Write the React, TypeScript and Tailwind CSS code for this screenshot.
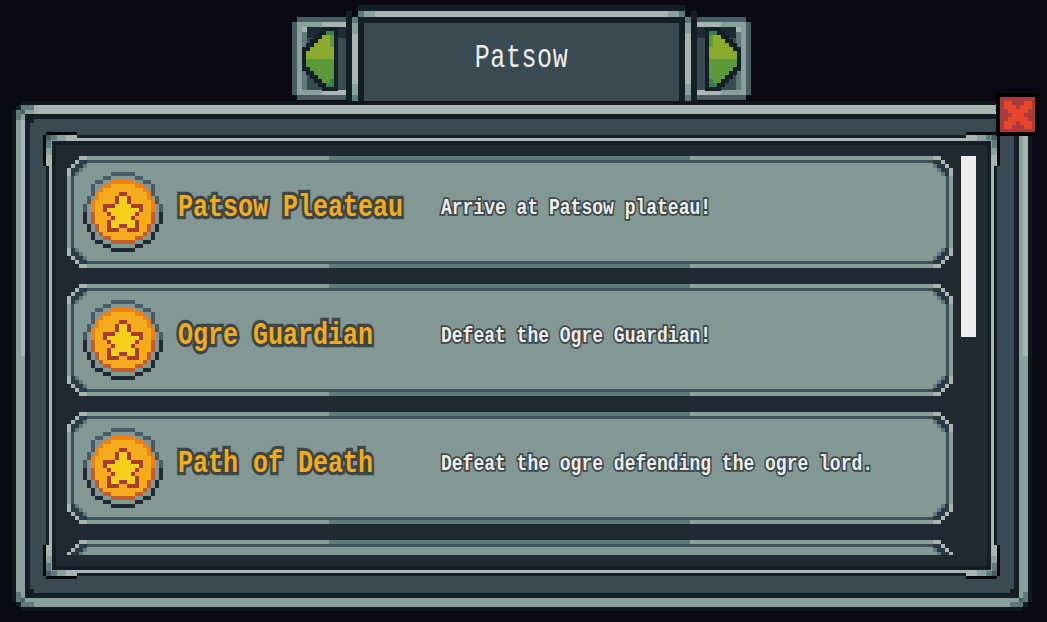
import React from "react";

const LIGHT = "#a8b5b2";
const MID = "#8aa09c";
const SLATE = "#5f7a7b";
const SLATE2 = "#465c62";
const DARK = "#141e27";
const INK = "#1f2a33";
const PANEL = "#3a4a52";
const BG = "#080912";

type R = [number, number, number, number, string];
function Rects({ items }: { items: R[] }) {
  return (
    <>
      {items.map(([x, y, w, h, c], i) => (
        <rect key={i} x={x} y={y} width={w} height={h} fill={c} />
      ))}
    </>
  );
}

function ArrowButton({ flip }: { flip?: boolean }) {
  const cols: [number, number, number][] = [
    [306, 51, 67],
    [310, 47, 71],
    [314, 43, 75],
    [318, 39, 79],
    [322, 35, 83],
    [326, 31, 87],
    [330, 31, 87],
  ];
  const items: R[] = [
    [304, 27, 42, 64, PANEL],
    [307, 27, 31, 11, INK],
    [297, 17, 49, 5, SLATE2],
    [297, 22, 49, 5, MID],
    [322, 22, 24, 5, LIGHT],
    [292, 22, 5, 73, SLATE2],
    [297, 27, 5, 63, MID],
    [302, 27, 5, 63, SLATE],
    [302, 27, 5, 5, LIGHT],
    [297, 95, 49, 5, SLATE2],
    [297, 90, 49, 5, MID],
    [322, 90, 24, 5, LIGHT],
    [338, 27, 8, 11, INK],
    [334, 27, 4, 64, DARK],
    [326, 27, 8, 4, DARK],
    [326, 87, 12, 4, DARK],
  ];
  cols.forEach(([x, a, b]) => {
    items.push([x - 4, a - 4, 8, b - a + 8, DARK]);
  });
  cols.forEach(([x, a, b]) => {
    items.push([x, a, 4, 59 - a, "#8aab2e"]);
    items.push([x, 59, 4, b - 59, "#5a9a3a"]);
  });
  items.push([326, 31, 8, 4, "#3a8055"], [330, 35, 4, 12, "#5f9a3a"], [330, 79, 4, 8, "#3a8055"], [326, 83, 8, 4, "#3a8055"]);
  return (
    <svg
      width={54}
      height={84}
      viewBox="292 17 54 84"
      shapeRendering="crispEdges"
      className={flip ? "block -scale-x-100" : "block"}
    >
      <Rects items={items} />
    </svg>
  );
}

function Tab() {
  return (
    <div className="flex h-[96px] w-[351px]">
      <div className="mt-[6px] w-[6px] bg-[#141e27]" />
      <div className="mt-[12px] w-[6px] bg-[linear-gradient(to_bottom,#5f7a7b_0,#5f7a7b_6px,#8aa09c_6px,#8aa09c_17px,#a8b5b2_17px,#a8b5b2_67px,#8aa09c_67px,#8aa09c_78px,#5f7a7b_78px)]" />
      <div className="flex min-w-0 flex-1 flex-col">
        <div className="h-[6px] bg-[#141e27]" />
        <div className="h-[6px] bg-[linear-gradient(to_right,#5f7a7b_0,#5f7a7b_6px,#8aa09c_6px,#8aa09c_17px,#a8b5b2_17px,#a8b5b2_310px,#8aa09c_310px,#8aa09c_321px,#5f7a7b_321px)]" />
        <div className="flex flex-1 items-center justify-center border-x-[6px] border-t-[6px] border-[#141e27] bg-[#3a4a52]">
          <span className="mb-[8px] inline-block origin-center scale-y-[1.3] font-['Liberation_Mono',monospace] text-[25px] leading-none tracking-[0.6px] text-[#eeeeee]">
            Patsow
          </span>
        </div>
      </div>
      <div className="mt-[12px] w-[6px] bg-[linear-gradient(to_bottom,#5f7a7b_0,#5f7a7b_6px,#8aa09c_6px,#8aa09c_17px,#a8b5b2_17px,#a8b5b2_67px,#8aa09c_67px,#8aa09c_78px,#5f7a7b_78px)]" />
      <div className="mt-[6px] w-[6px] bg-[#141e27]" />
    </div>
  );
}

function Coin() {
  const disc: [number, number, number][] = [
    [2, 7, 12], [3, 5, 14], [4, 4, 15], [5, 3, 16], [6, 3, 16],
    [7, 2, 17], [8, 2, 17], [9, 2, 17], [10, 2, 17], [11, 2, 17], [12, 2, 17],
    [13, 3, 16], [14, 3, 16], [15, 4, 15], [16, 5, 14], [17, 7, 12],
  ];
  const inner: [number, number, number][] = [
    [3, 7, 12], [4, 5, 14], [5, 4, 15], [6, 4, 15],
    [7, 3, 16], [8, 3, 16], [9, 3, 16], [10, 3, 16], [11, 3, 16], [12, 3, 16],
    [13, 4, 15], [14, 4, 15], [15, 5, 14], [16, 7, 12],
  ];
  const items: R[] = [];
  disc.forEach(([r, a, b]) => items.push([a, r, b - a + 1, 1, r < 10 ? "#f57f17" : "#c75a2a"]));
  inner.forEach(([r, a, b]) => items.push([a, r, b - a + 1, 1, "#f5ac1b"]));
  const ringTop = "#465c62";
  const ringLow = "#1f2a33";
  const ring: [number, number, number][] = [
    [0, 7, 12], [1, 5, 6], [1, 13, 14], [2, 3, 4], [2, 15, 16], [3, 2, 2], [3, 17, 17],
    [4, 2, 2], [4, 17, 17], [5, 2, 2], [5, 17, 17], [6, 1, 1], [6, 18, 18], [7, 1, 1], [7, 18, 18],
    [8, 0, 0], [8, 19, 19], [9, 0, 0], [9, 19, 19], [10, 0, 0], [10, 19, 19], [11, 0, 0], [11, 19, 19],
    [12, 0, 0], [12, 19, 19], [13, 1, 1], [13, 18, 18], [14, 1, 1], [14, 18, 18], [15, 2, 2], [15, 17, 17],
    [16, 2, 2], [16, 17, 17], [17, 3, 4], [17, 15, 16], [18, 5, 6], [18, 13, 14], [19, 7, 12],
  ];
  ring.forEach(([r, a, b]) => items.push([a, r, b - a + 1, 1, r < 10 ? ringTop : ringLow]));
  const R_ = "#a83a3a";
  const Y = "#f5d018";
  const star: [number, number, number, string][] = [
    [5, 9, 10, R_],
    [6, 8, 8, R_], [6, 9, 10, Y], [6, 11, 11, R_],
    [7, 8, 8, R_], [7, 9, 10, Y], [7, 11, 11, R_],
    [8, 5, 7, R_], [8, 8, 11, Y], [8, 12, 14, R_],
    [9, 5, 5, R_], [9, 6, 13, Y], [9, 14, 14, R_],
    [10, 6, 6, R_], [10, 7, 12, Y], [10, 13, 13, R_],
    [11, 7, 7, R_], [11, 8, 11, Y], [11, 12, 12, R_],
    [12, 6, 6, R_], [12, 7, 12, Y], [12, 13, 13, R_],
    [13, 6, 6, R_], [13, 7, 8, Y], [13, 9, 10, R_], [13, 11, 12, Y], [13, 13, 13, R_],
    [14, 6, 8, R_], [14, 11, 13, R_],
  ];
  star.forEach(([r, a, b, c]) => items.push([a, r, b - a + 1, 1, c]));
  return (
    <svg width={80} height={80} viewBox="0 0 20 20" shapeRendering="crispEdges" className="block shrink-0">
      <Rects items={items} />
    </svg>
  );
}

function CardCorner({ className }: { className: string }) {
  const items: R[] = [
    [0, 0, 3, 1, INK], [0, 1, 2, 1, INK], [0, 2, 1, 1, INK],
    [3, 0, 2, 1, LIGHT], [2, 1, 1, 1, LIGHT], [1, 2, 1, 1, LIGHT], [0, 3, 1, 2, LIGHT],
    [3, 1, 2, 1, "#2b3a44"], [2, 2, 2, 1, "#2b3a44"], [1, 3, 2, 1, "#2b3a44"], [1, 4, 1, 1, "#2b3a44"],
    [4, 2, 1, 1, SLATE], [3, 3, 1, 1, SLATE], [2, 4, 1, 1, SLATE],
  ];
  return (
    <svg width={24} height={24} viewBox="0 0 6 6" shapeRendering="crispEdges" className={`absolute ${className}`}>
      <Rects items={items} />
    </svg>
  );
}

function Card({ title, text }: { title?: string; text?: string }) {
  return (
    <div className="relative h-[112px] w-[886px] shrink-0 border-[4px] border-[#8aa09c]">
      <div className="flex h-full items-center border-[3px] border-[#3e5058] bg-[#839794] pl-[9px]">
        {title ? (
          <>
            <Coin />
            <div className="mb-[8px] ml-[15px] w-[263px] shrink-0">
              <span className="inline-block origin-left scale-y-[1.28] font-['Liberation_Mono',monospace] text-[25px] font-bold leading-none text-[#f5ac1b] [-webkit-text-stroke:5px_#3c4648] [paint-order:stroke_fill]">
                {title}
              </span>
            </div>
            <span className="mb-[8px] inline-block origin-left scale-y-[1.2] font-['Liberation_Mono',monospace] text-[18px] font-bold leading-none text-[#eeeeee] [-webkit-text-stroke:3px_#3c4648] [paint-order:stroke_fill]">
              {text}
            </span>
          </>
        ) : null}
      </div>
      <div className="absolute left-[258px] top-[-4px] h-[4px] w-[361px] bg-[#5f7a7b]" />
      <div className="absolute bottom-[-4px] left-[258px] h-[4px] w-[361px] bg-[#5f7a7b]" />
      <CardCorner className="left-[-4px] top-[-4px]" />
      <CardCorner className="right-[-4px] top-[-4px] -scale-x-100" />
      <CardCorner className="bottom-[-4px] left-[-4px] -scale-y-100" />
      <CardCorner className="bottom-[-4px] right-[-4px] -scale-100" />
    </div>
  );
}

function FrameCorner({ className }: { className: string }) {
  const items: R[] = [
    [3, 0, 31, 3, "#05070c"],
    [0, 3, 3, 31, "#05070c"],
    [3, 3, 31, 6, LIGHT],
    [3, 3, 6, 31, LIGHT],
    [3, 3, 20, 6, MID],
    [3, 3, 6, 20, MID],
    [3, 3, 11, 5, SLATE],
    [3, 3, 5, 13, SLATE],
    [3, 3, 5, 5, SLATE2],
    [9, 9, 3, 3, DARK],
  ];
  return (
    <svg width={34} height={34} viewBox="0 0 34 34" shapeRendering="crispEdges" className={`absolute ${className}`}>
      <Rects items={items} />
    </svg>
  );
}

function OuterCorner({ className }: { className: string }) {
  const items: R[] = [
    [0, 0, 9, 4, BG],
    [0, 4, 4, 5, BG],
    [4, 4, 5, 5, DARK],
    [9, 4, 13, 5, SLATE],
    [4, 9, 5, 10, SLATE],
    [9, 9, 4, 4, SLATE2],
    [9, 13, 4, 6, MID],
    [13, 9, 9, 4, MID],
    [13, 13, 5, 5, DARK],
    [18, 18, 4, 4, DARK],
  ];
  return (
    <svg width={30} height={30} viewBox="0 0 30 30" shapeRendering="crispEdges" className={`absolute ${className}`}>
      <Rects items={items} />
    </svg>
  );
}

function CloseButton() {
  const rows = ["1100011", "1110111", "0111110", "0011100", "0111110", "1110111", "1100011"];
  return (
    <div className="absolute right-[8px] top-[93px] flex h-[43px] w-[43px] items-center justify-center border-[4px] border-black bg-[#a83c3c]">
      <svg width={28} height={28} viewBox="0 0 7 7" shapeRendering="crispEdges" className="block">
        {rows.map((row, y) =>
          row.split("").map((c, x) => (c === "1" ? <rect key={`${x}-${y}`} x={x} y={y} width={1} height={1} fill="#e8452a" /> : null)),
        )}
      </svg>
    </div>
  );
}

const quests = [
  { title: "Patsow Pleateau", text: "Arrive at Patsow plateau!" },
  { title: "Ogre Guardian", text: "Defeat the Ogre Guardian!" },
  { title: "Path of Death", text: "Defeat the ogre defending the ogre lord." },
];

export default function App() {
  return (
    <div className="relative h-[622px] w-[1047px] overflow-hidden bg-[#080912] font-['Liberation_Mono',monospace]">
      <div className="flex h-[101px] items-end pl-[292px]">
        <ArrowButton />
        <Tab />
        <ArrowButton flip />
      </div>

      <div className="relative ml-[12px] h-[510px] w-[1020px] border-[4px] border-[#10171f]">
        <div className="flex h-full border-y-[9px] border-b-[#8aa09c] border-t-[#a8b5b2]">
          <div className="w-[9px] shrink-0 bg-[linear-gradient(to_bottom,#a8b5b2_0,#a8b5b2_242px,#8aa09c_242px)]">
            <div className="h-full w-[5px] bg-[#8aa09c]" />
          </div>
          <div className="min-w-0 flex-1 border-[5px] border-[#141e27] bg-[#3a4a52] pb-[17px] pl-[16px] pr-[17px] pt-[16px]">
            <div className="relative h-full border-[3px] border-[#141e27]">
              <div className="h-full border-[3px] border-[#a8b5b2]">
                <div className="flex h-full border-[4px] border-[#141e27] bg-[#1f2a33] p-[11px]">
                  <div className="flex w-[886px] shrink-0 flex-col gap-[16px] overflow-hidden">
                    {quests.map((q) => (
                      <Card key={q.title} title={q.title} text={q.text} />
                    ))}
                    <Card />
                  </div>
                  <div className="ml-[8px] h-[181px] w-[15px] shrink-0 bg-[#eeeeee]" />
                </div>
              </div>
              <FrameCorner className="left-[-6px] top-[-6px]" />
              <FrameCorner className="right-[-6px] top-[-6px] -scale-x-100" />
              <FrameCorner className="bottom-[-6px] left-[-6px] -scale-y-100" />
              <FrameCorner className="bottom-[-6px] right-[-6px] -scale-100" />
            </div>
          </div>
          <div className="w-[9px] shrink-0 bg-[linear-gradient(to_bottom,#a8b5b2_0,#a8b5b2_242px,#8aa09c_242px)]">
            <div className="h-full w-[4px] bg-[#8aa09c]" />
          </div>
        </div>
        <OuterCorner className="left-[-4px] top-[-4px]" />
        <OuterCorner className="right-[-4px] top-[-4px] -scale-x-100" />
        <OuterCorner className="bottom-[-4px] left-[-4px] -scale-y-100" />
        <OuterCorner className="bottom-[-4px] right-[-4px] -scale-100" />
      </div>

      <CloseButton />
    </div>
  );
}
